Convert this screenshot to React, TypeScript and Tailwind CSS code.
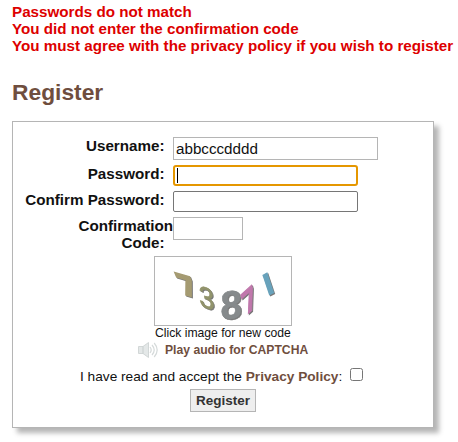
import type { ReactNode } from 'react';

const errors = [
  'Passwords do not match',
  'You did not enter the confirmation code',
  'You must agree with the privacy policy if you wish to register',
];

function Row({ label, className, children }: { label: ReactNode; className: string; children: ReactNode }) {
  return (
    <div className={`flex items-start ${className}`}>
      <label className="mr-[8.5px] w-[151.5px] shrink-0 text-right font-bold whitespace-nowrap text-[#111]">{label}</label>
      {children}
    </div>
  );
}

const digits = [
  { char: '7', color: '#a59b72', weight: 700, stroke: 1.5, family: 'Open Sans', matrix: 'matrix(1.4 0.42 0.62 1.5 28.3 37)' },
  { char: '3', color: '#92946c', weight: 400, stroke: 0.4, family: 'Liberation Sans', matrix: 'matrix(1.4 0.5 0.1 1.5 44.5 48.5)' },
  { char: '8', color: '#868a8c', weight: 700, stroke: 0.3, family: 'Liberation Sans', matrix: 'matrix(1.93 -0.13 0 1.98 65.5 62.3)' },
  { char: '7', color: '#c078ac', weight: 700, stroke: 0.8, family: 'Open Sans', matrix: 'matrix(1.05 -0.95 0.4 1.4 91 58.5)' },
  { char: 'I', color: '#68a2bb', weight: 700, stroke: 0, family: 'Liberation Sans', matrix: 'matrix(1.7 -0.9 0.5 1.5 112 39.8)' },
];

function Captcha() {
  return (
    <div className="ml-[141px] mt-[5px] h-[70px] w-[138px] border border-[#b5b5b5]">
      <svg width="136" height="68" viewBox="0 0 136 68" fontSize="20" className="overflow-visible drop-shadow-[1px_1px_0_#777777]">
        {digits.map((d, i) => (
          <text
            key={i}
            transform={d.matrix}
            fill={d.color}
            fontFamily={`${d.family}, sans-serif`}
            fontWeight={d.weight}
            stroke={d.color}
            strokeWidth={d.stroke}
          >
            {d.char}
          </text>
        ))}
      </svg>
    </div>
  );
}

function Speaker() {
  return (
    <svg width="22" height="18" viewBox="0 0 22 18" fill="none" className="mr-[5px]">
      <path d="M0.5 5.5h4.5L10.5 1.5v15L5 12.5H.5z" fill="#e4e8e8" stroke="#d2d7d7" />
      <path d="M5 5.5v7" stroke="#c8cece" />
      <path d="M12 6q2.4 3 0 6M14 4q4.4 5 0 10M16.2 2q6 7 0 14" stroke="#d5dada" strokeWidth="1.2" />
    </svg>
  );
}

export default function App() {
  return (
    <main className="h-[442px] w-[458px] overflow-hidden bg-white pl-3 pt-[3px] font-['Liberation_Sans',Arial,sans-serif] text-[15.2px] leading-[17px] text-[#111]">
      <div className="font-bold whitespace-nowrap text-[#dd0000]">
        {errors.map((e) => (
          <p key={e}>{e}</p>
        ))}
      </div>
      <h1 className="mt-[25px] text-[22.8px] leading-[26px] font-bold text-[#6f4e3e]">Register</h1>
      <form className="mt-4 h-[307px] w-[422px] border border-[#b5b5b5] bg-white pt-[15px] shadow-[5px_5px_5px_#b5b5b5]">
        <Row label="Username:" className="h-7">
          <input type="text" defaultValue="abbcccdddd" className="h-[23px] w-[205px] border border-[#b5b5b5] px-[2px] outline-none" />
        </Row>
        <Row label="Password:" className="h-[26px]">
          <div className="relative h-[21px] w-[185px]">
            <input type="password" className="block h-[21px] w-[185px] rounded-[3px] border-2 border-[#e59700] outline-none" />
            <span className="absolute top-[3px] left-1 h-[15px] w-px bg-black" />
          </div>
        </Row>
        <Row label="Confirm Password:" className="h-[26px]">
          <input type="password" className="h-[21px] w-[185px] rounded-[2px] border border-[#767676] outline-none" />
        </Row>
        <Row
          label={
            <>
              <span className="-mr-[8.5px] block">Confirmation</span>
              <span className="block">Code:</span>
            </>
          }
          className="h-[34px]"
        >
          <input type="text" className="h-[23px] w-[70px] border border-[#b5b5b5] outline-none" />
        </Row>
        <Captcha />
        <p className="ml-[142px] text-[12.16px] leading-[14px]">Click image for new code</p>
        <div className="ml-[125px] mt-px flex h-[18px] items-center text-[12.16px] leading-[14px] font-bold text-[#6f4e3e]">
          <Speaker />
          <a>Play audio for CAPTCHA</a>
        </div>
        <div className="ml-[67px] mt-[9px] flex h-[21px] items-start text-[13.68px] leading-[17px] whitespace-nowrap">
          <span>
            I have read and accept the <a className="font-bold text-[#6f4e3e]">Privacy Policy</a>:
          </span>
          <input type="checkbox" className="ml-2 h-[13px] w-[13px]" />
        </div>
        <button type="button" className="ml-[177px] block h-[23px] w-[66px] border border-[#b5b5b5] bg-[#eeeeee] text-center text-[13.5px] leading-[21px] font-bold text-[#333]">
          Register
        </button>
      </form>
    </main>
  );
}
